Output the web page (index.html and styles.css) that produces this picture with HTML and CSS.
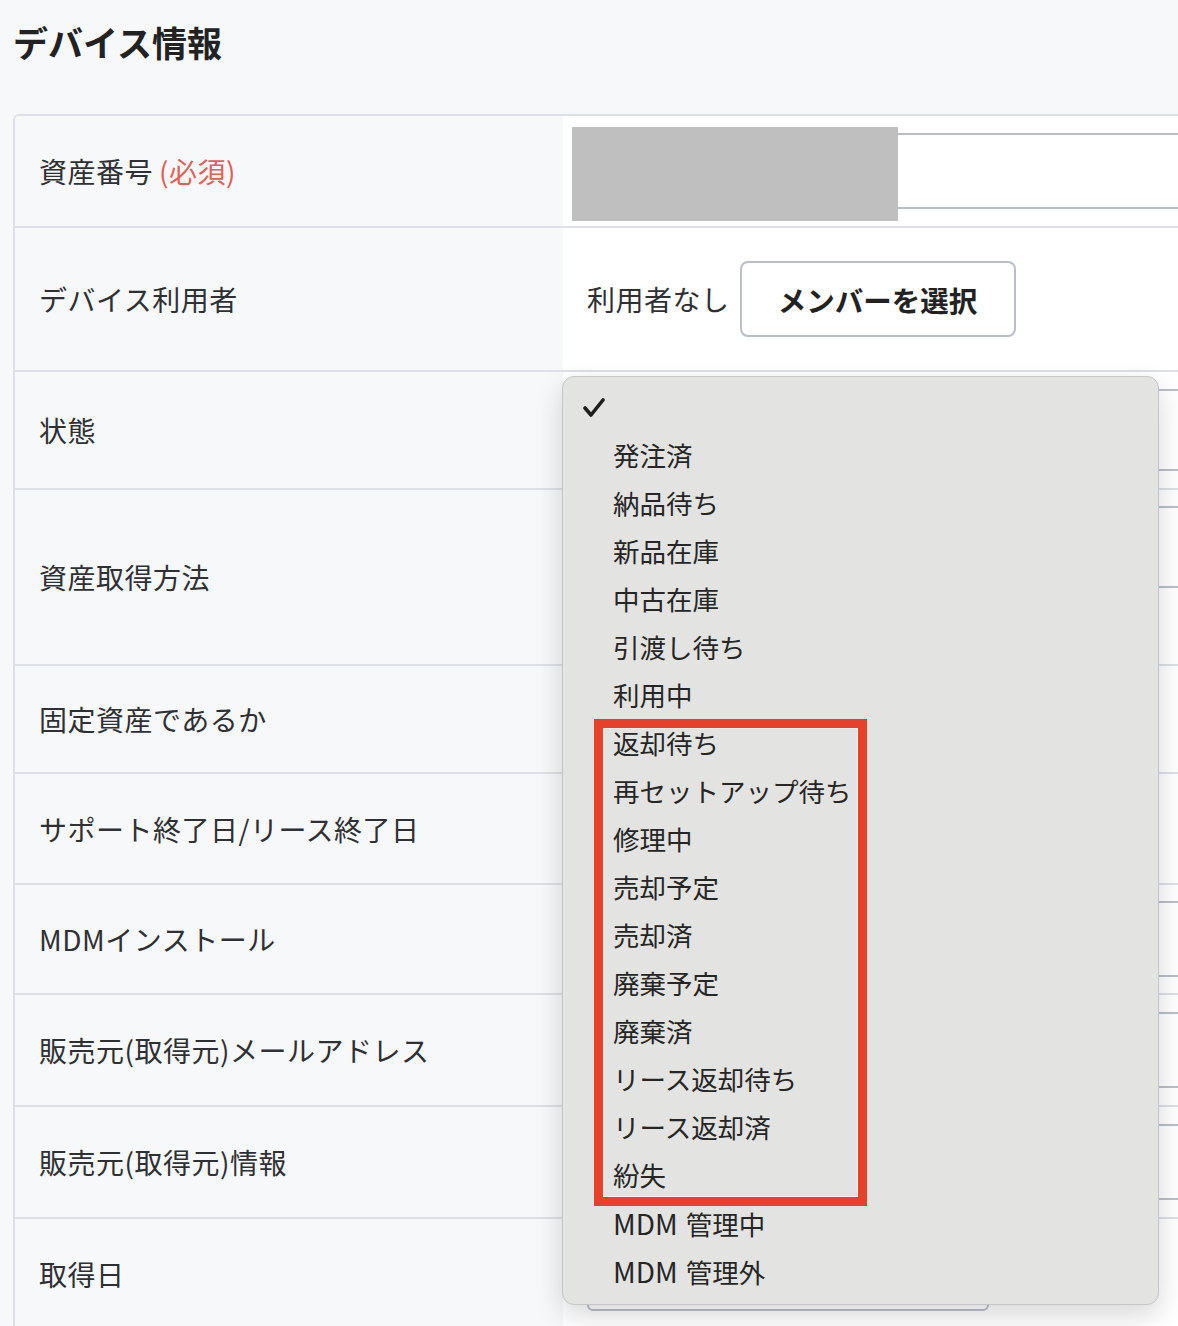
FILE: index.html
```html
<!doctype html>
<html>

<head>
    <meta charset="utf-8">
    <title>デバイス情報</title>
    <link rel="stylesheet" href="styles.css">
</head>

<body>
<div class="page">
    <h1 class="title">デバイス情報</h1>

    <div class="form">
        <div class="label first">資産番号<em>(必須)</em></div>
        <div class="field first">
            <input type="text" class="text">
            <div class="mask"></div>
        </div>

        <div class="label">デバイス利用者</div>
        <div class="field">
            <span class="member">利用者なし</span>
            <button type="button" class="btn">メンバーを選択</button>
        </div>

        <div class="label">状態</div>
        <div class="field">
            <div class="select"></div>
        </div>

        <div class="label">資産取得方法</div>
        <div class="field top">
            <div class="select"></div>
        </div>

        <div class="label">固定資産であるか</div>
        <div class="field"></div>

        <div class="label">サポート終了日/リース終了日</div>
        <div class="field">
            <input type="text" class="text date">
        </div>

        <div class="label">MDMインストール</div>
        <div class="field">
            <input type="text" class="text short">
        </div>

        <div class="label">販売元(取得元)メールアドレス</div>
        <div class="field">
            <input type="text" class="text">
        </div>

        <div class="label">販売元(取得元)情報</div>
        <div class="field">
            <input type="text" class="text">
        </div>

        <div class="label">取得日</div>
        <div class="field top">
            <input type="text" class="text date">
        </div>
    </div>

    <!-- 状態のプルダウン（開いた状態） -->
    <div class="menu">
        <ul>
            <li class="checked"><svg class="tick" width="22" height="20" viewBox="0 0 22 20"><polyline points="2,10 8,17 20,2" fill="none" stroke="#1e1e1e" stroke-width="3.6" stroke-linecap="round" stroke-linejoin="round"/></svg></li>
            <li>発注済</li>
            <li>納品待ち</li>
            <li>新品在庫</li>
            <li>中古在庫</li>
            <li>引渡し待ち</li>
            <li>利用中</li>
            <li>返却待ち</li>
            <li>再セットアップ待ち</li>
            <li>修理中</li>
            <li>売却予定</li>
            <li>売却済</li>
            <li>廃棄予定</li>
            <li>廃棄済</li>
            <li>リース返却待ち</li>
            <li>リース返却済</li>
            <li>紛失</li>
            <li><span class="en">MDM</span>管理中</li>
            <li><span class="en">MDM</span>管理外</li>
        </ul>
        <div class="mark"></div>
    </div>
</div>
</body>

</html>
```

FILE: styles.css
```css
* {
    padding: 0;
    margin: 0;
    box-sizing: border-box;
}

html,
body {
    overflow: hidden;
}

body {
    background: #f7f8fa;
    color: #2f3033;
    font-family: "Noto Sans CJK JP", "Noto Sans", sans-serif;
}

.page {
    position: relative;
    padding: 20px 0 0 13px;
}

.title {
    font-size: 35px;
    line-height: 44px;
    font-weight: bold;
    color: #222;
}

/* フォーム */
.form {
    display: grid;
    grid-template-columns: 548px 1fr;
    grid-template-rows: 110px 144px 118px 176px 108px 111px 110px 112px 112px 112px;
    width: 1220px;
    margin-top: 50px;
    border: 2px solid #dde0e6;
    border-radius: 6px;
    overflow: hidden;
}

.label {
    display: flex;
    align-items: center;
    padding-left: 24px;
    font-size: 28px;
    letter-spacing: 0.5px;
    border-top: 2px solid #dde0e6;
    background: #f7f8fa;
}

.label em {
    font-style: normal;
    color: #e0605a;
    margin-left: 6px;
}

.field {
    position: relative;
    display: flex;
    align-items: center;
    padding: 0 24px;
    border-top: 2px solid #dde0e6;
    background: #fff;
}

.first {
    border-top: none;
}

.field.top {
    align-items: flex-start;
    padding-top: 16px;
}

.text,
.select {
    display: block;
    width: 100%;
    height: 76px;
    border: 2px solid #b9bec9;
    border-radius: 6px;
    background: #fff;
}

.select {
    height: 82px;
}

.text.date {
    width: 402px;
}

.mask {
    position: absolute;
    left: 9px;
    top: 11px;
    width: 326px;
    height: 94px;
    background: #bfbfbf;
}

.member {
    font-size: 28px;
    letter-spacing: 0.5px;
    margin-right: 10px;
}

.btn {
    width: 276px;
    height: 76px;
    border: 2px solid #b9bec9;
    border-radius: 8px;
    background: #fff;
    font: bold 28.5px "Noto Sans CJK JP", "Noto Sans", sans-serif;
    color: #222;
}

/* プルダウン */
.menu {
    position: absolute;
    left: 562px;
    top: 376px;
    width: 597px;
    height: 929px;
    padding: 6px 0 10px;
    background: #e3e3e1;
    border: 1px solid #c6c6c6;
    border-radius: 12px;
    box-shadow: 0 10px 28px rgba(0, 0, 0, 0.16);
}

.menu li {
    list-style: none;
    height: 48px;
    line-height: 48px;
    padding-left: 50px;
    font-size: 26.5px;
    color: #262626;
}

.menu li.checked {
    position: relative;
}

.menu .en {
    font-size: 28px;
    margin-right: 8px;
}

.tick {
    position: absolute;
    left: 20px;
    top: 15px;
}

.mark {
    position: absolute;
    left: 31px;
    top: 342px;
    width: 273px;
    height: 487px;
    border: 9px solid #e8412b;
    box-shadow: inset 0 0 0 1px #f3f3f1;
}
```
